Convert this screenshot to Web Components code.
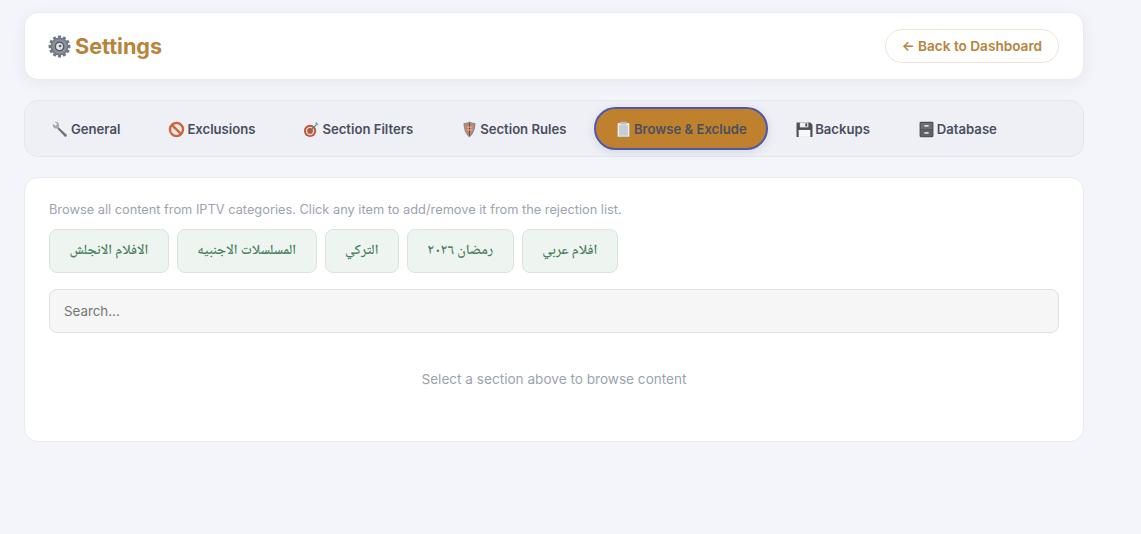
<!DOCTYPE html>
<html><head><meta charset="utf-8">
<style>
html,body{margin:0;padding:0;background:#f4f5fa;font-family:Inter,"Liberation Sans",sans-serif;}
body{height:534px;overflow:hidden}
</style></head><body>
<settings-page>
  <settings-header></settings-header>
  <settings-tabs></settings-tabs>
  <browse-card></browse-card>
</settings-page>
<script>
const ICONS={
gear:s=>`<svg width="${s}" height="${s}" viewBox="0 0 24 24"><g fill="#737985"><circle cx="12" cy="12" r="9.300"/>${[0,30,60,90,120,150,180,210,240,270,300,330].map(a=>`<rect x="10.300" y="0.600" width="3.400" height="4" rx=".6" transform="rotate(${a} 12 12)"/>`).join('')}</g><circle cx="12" cy="12" r="7.600" fill="#8d929d"/><circle cx="12" cy="12" r="5.200" fill="#555a64"/><circle cx="12" cy="12" r="3.600" fill="#e2e4e8"/><circle cx="12.600" cy="11.500" r="1.400" fill="#5a5f69"/></svg>`,
wrench:s=>`<svg width="${s}" height="${s}" viewBox="0 0 18 18"><path d="M7 6.500 L15.600 14.600 a1.500 1.500 0 0 1 -2 2 L5.500 8" fill="#6b7280"/><path d="M1 2.800 L3.600 5 L5 4.200 L5 2.600 L2.600 .9 C4.800 .1 7.600 1.600 7.600 4.600 C7.600 7.600 4.600 8.800 2.600 7.600 C1.200 6.800 .6 4.800 1 2.800Z" fill="#a3a8b2"/></svg>`,
no:s=>`<svg width="${s}" height="${s}" viewBox="0 0 16 16"><circle cx="8" cy="8" r="6.200" fill="#ece6e4" stroke="#c9663f" stroke-width="2.200"/><path d="M3.600 3.600 L12.400 12.400" stroke="#c9663f" stroke-width="2.200"/></svg>`,
target:s=>`<svg width="${s}" height="${s}" viewBox="0 0 18 18"><circle cx="7.500" cy="10.500" r="6.500" fill="#b9573f"/><circle cx="7.500" cy="10.500" r="4.500" fill="#e7d6cf"/><circle cx="7.500" cy="10.500" r="3" fill="#b9573f"/><path d="M7.500 10.500 L14 4" stroke="#5b7d8c" stroke-width="1.200"/><path d="M13 2.500 L14 4 L16.500 4.600 L15.400 2.800 L14.400 1Z" fill="#5fa0b4"/></svg>`,
shield:s=>`<svg width="${s}" height="${s}" viewBox="0 0 18 18"><path d="M9 .6 C11 1.800 13.500 2.200 15.200 2.200 C15.600 8 13.500 13.800 9 17.400 C4.500 13.800 2.400 8 2.800 2.200 C4.500 2.200 7 1.800 9 .6Z" fill="#8b8e96"/><path d="M9 2.400 C10.800 3.200 12.600 3.500 13.800 3.500 C14 8.200 12.500 12.800 9 15.600 C5.500 12.800 4 8.200 4.200 3.500 C5.400 3.500 7.200 3.200 9 2.400Z" fill="#c4856f"/><path d="M9 2.400 V15.600" stroke="#7a3f30" stroke-width="1"/><path d="M6 6.500 H12 M6 9.500 H12" stroke="#e3c4b6" stroke-width=".9"/></svg>`,
clip:s=>`<svg width="${s}" height="${s}" viewBox="0 0 16 16"><rect x="2.500" y="1.800" width="11" height="13.700" rx="1" fill="#f4f1e6"/><rect x="3.800" y="3.800" width="8.400" height="10" fill="#c9ccd4"/><rect x="5" y=".6" width="6" height="2.600" rx=".6" fill="#b9bcc4"/><rect x="2.500" y="14.800" width="11" height=".8" fill="#7d6a40"/></svg>`,
disk:s=>`<svg width="${s}" height="${s}" viewBox="0 0 16 16"><path d="M.5 1.500 H13.500 L15.500 3.500 V15 H.5Z" fill="#4a4e58"/><rect x="3.600" y="1.500" width="8" height="4.500" fill="#eef0f3"/><rect x="8.800" y="2.200" width="1.800" height="3" fill="#4a4e58"/><rect x="2.500" y="8.400" width="11" height="6.600" fill="#f7f8fa"/></svg>`,
cabinet:s=>`<svg width="${s}" height="${s}" viewBox="0 0 16 16"><rect x="1.500" y=".8" width="13" height="14.400" rx="1" fill="#4b4f58"/><rect x="2.600" y="1.800" width="10.800" height="5.900" fill="#6b6f78"/><rect x="2.600" y="8.500" width="10.800" height="5.800" fill="#5e626b"/><rect x="6" y="3.800" width="4" height="1.500" fill="#e5e7eb"/><rect x="6" y="10.500" width="4" height="1.500" fill="#e5e7eb"/></svg>`
};
class SettingsPage extends HTMLElement{constructor(){super();this.attachShadow({mode:'open'}).innerHTML=`<style>:host{display:flex;flex-direction:column;gap:20px;width:1060px;margin:12px 0 0 24px}</style><slot></slot>`}}
class SettingsHeader extends HTMLElement{constructor(){super();this.attachShadow({mode:'open'}).innerHTML=`<style>
:host{display:flex;align-items:center;justify-content:space-between;box-sizing:border-box;height:68px;padding:0 24px;background:#fff;border:1px solid #e9ebf1;border-radius:14px;box-shadow:0 4px 16px rgba(30,40,80,.06)}
h1{display:flex;align-items:center;gap:4px;margin:0;padding-top:1px;font:700 21.6px/1 Inter,sans-serif;color:#b8833a}
svg{display:block;margin-left:-1px}
a{display:block;box-sizing:border-box;height:34px;padding:0 16px;border:1px solid #efe3d5;border-radius:17px;font:600 13.6px/32px Inter,sans-serif;color:#b8833a;background:#fff}
</style><h1>${ICONS.gear(23)}<span>Settings</span></h1><a>← Back to Dashboard</a>`}}
const TABS=[['wrench','General'],['no','Exclusions'],['target','Section Filters'],['shield','Section Rules'],['clip','Browse &amp; Exclude',1],['disk','Backups'],['cabinet','Database']];
class SettingsTabs extends HTMLElement{constructor(){super();this.attachShadow({mode:'open'}).innerHTML=`<style>
:host{display:flex;gap:8px;box-sizing:border-box;height:57px;padding:6px 6px 6px 7px;background:#eef0f5;border:1px solid #e4e6ec;border-radius:14px}
.t{display:flex;align-items:center;gap:2px;box-sizing:border-box;height:43px;padding:2px 20px 0;border-radius:22px;font:600 13.12px/1 Inter,sans-serif;color:#4a4f5f;white-space:nowrap}
.t.on{background:#c0812f;border:2px solid #5258a8;padding:2px 19.5px 0 18.5px;box-shadow:0 2px 10px rgba(30,40,80,.12)}
svg{display:block;flex:none}
</style>${TABS.map(([i,l,a])=>`<div class="t${a?' on':''}">${ICONS[i](17)}<span>${l}</span></div>`).join('')}`}}
const CATS=['الافلام الانجلش','المسلسلات الاجنبيه','التركي','رمضان ٢٠٢٦','افلام عربي'];
class BrowseCard extends HTMLElement{constructor(){super();this.attachShadow({mode:'open'}).innerHTML=`<style>
:host{display:block;box-sizing:border-box;height:265px;padding:24px;background:#fff;border:1px solid #e9ebf1;border-radius:14px}
p{margin:0;font:400 12.8px/15px Inter,sans-serif;color:#9ca3af;}
.c{display:flex;gap:8px;margin-top:12px}
.b{box-sizing:border-box;height:44px;padding:0 19.5px;display:flex;align-items:center;background:#eef5f0;border:1px solid #d8e5dc;border-radius:8px;font:600 14.1px/1 "Noto Naskh Arabic",Inter,sans-serif;color:#4a7f60;white-space:nowrap}
.s{box-sizing:border-box;height:44px;margin-top:16px;padding:1px 14px 0;display:flex;align-items:center;background:#f6f6f6;border:1px solid #dfe1e6;border-radius:8px;font:400 13.33px/1 Inter,sans-serif;color:#757575}
.e{margin-top:38px;text-align:center;font:400 13.6px/16px Inter,sans-serif;color:#9ca3af}
</style><p>Browse all content from IPTV categories. Click any item to add/remove it from the rejection list.</p>
<div class="c">${CATS.map(c=>`<div class="b" dir="rtl">${c}</div>`).join('')}</div>
<div class="s">Search...</div><div class="e">Select a section above to browse content</div>`}}
customElements.define('settings-page',SettingsPage);
customElements.define('settings-header',SettingsHeader);
customElements.define('settings-tabs',SettingsTabs);
customElements.define('browse-card',BrowseCard);
</script></body></html>
